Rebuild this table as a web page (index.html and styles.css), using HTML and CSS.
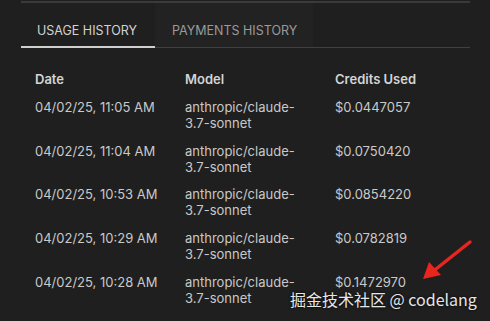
FILE: index.html
```html
<!DOCTYPE html>
<html lang="en">
<head>
    <meta charset="UTF-8">
    <meta name="viewport" content="width=device-width, initial-scale=1.0">
    <title>Usage History</title>
    <link rel="stylesheet" href="styles.css">
</head>
<body>
    <div class="panel">
        <!-- Tabs -->
        <div class="tabs">
            <div class="tab active">USAGE HISTORY</div>
            <div class="tab">PAYMENTS HISTORY</div>
        </div>

        <!-- Usage table -->
        <div class="usage">
            <div class="row head">
                <div>Date</div>
                <div>Model</div>
                <div>Credits Used</div>
            </div>
            <div class="row">
                <div>04/02/25, 11:05 AM</div>
                <div>anthropic/claude-3.7-sonnet</div>
                <div>$0.0447057</div>
            </div>
            <div class="row">
                <div>04/02/25, 11:04 AM</div>
                <div>anthropic/claude-3.7-sonnet</div>
                <div>$0.0750420</div>
            </div>
            <div class="row">
                <div>04/02/25, 10:53 AM</div>
                <div>anthropic/claude-3.7-sonnet</div>
                <div>$0.0854220</div>
            </div>
            <div class="row">
                <div>04/02/25, 10:29 AM</div>
                <div>anthropic/claude-3.7-sonnet</div>
                <div>$0.0782819</div>
            </div>
            <div class="row">
                <div>04/02/25, 10:28 AM</div>
                <div>anthropic/claude-3.7-sonnet</div>
                <div>$0.1472970</div>
            </div>
        </div>
    </div>

    <!-- Red pointer arrow -->
    <svg class="arrow" width="60" height="50" viewBox="0 0 60 50">
        <path d="M50 4 L16 31" stroke="#e8261f" stroke-width="3.5" stroke-linecap="round" fill="none"/>
        <path d="M3 41 L9 24 L21 37 Z" fill="#e8261f"/>
    </svg>

    <div class="mark">掘金技术社区 @ codelang</div>
</body>
</html>
```

FILE: styles.css
```css
/* Reset */
* {
    margin: 0;
    padding: 0;
    box-sizing: border-box;
}

body {
    width: 490px;
    height: 321px;
    overflow: hidden;
    background-color: #1f1f1f;
    font-family: Inter, "Noto Sans", sans-serif;
    color: #c9c9c9;
    padding-top: 1px;
}

.panel {
    margin-left: 21px;
    width: 449px;
    border-top: 2px solid #3a3a3a;
}

/* Tabs */
.tabs {
    display: flex;
    border-bottom: 1px solid #404040;
    height: 45px;
}

.tab {
    padding: 20px 16px 0;
    font-size: 12.5px;
    line-height: 16px;
    color: #9a9a9a;
}

.tab + .tab {
    padding-left: 17px;
    background-color: #222222;
}

.tab.active {
    width: 134px;
    color: #d2d2d2;
    border-bottom: 2px solid #cfcfcf;
    margin-bottom: -1px;
}

/* Table */
.usage {
    padding: 23px 0 0 14px;
    display: flex;
    flex-direction: column;
    gap: 11.75px;
}

.row {
    display: grid;
    grid-template-columns: 150px 150px 1fr;
    align-items: start;
    font-size: 13px;
    line-height: 16px;
    min-height: 32px;
}

.row > div:nth-child(2) {
    padding-right: 26px;
}

.row.head {
    min-height: 16px;
    font-weight: 600;
    color: #d4d4d4;
}

/* Overlays */
.arrow {
    position: absolute;
    left: 420px;
    top: 238px;
}

.mark {
    position: absolute;
    left: 290px;
    top: 290px;
    font-family: "Noto Sans CJK SC", "Noto Sans", sans-serif;
    font-size: 16px;
    line-height: 18px;
    color: #e6e6e6;
    text-shadow: 0 0 3px #000;
}
```
